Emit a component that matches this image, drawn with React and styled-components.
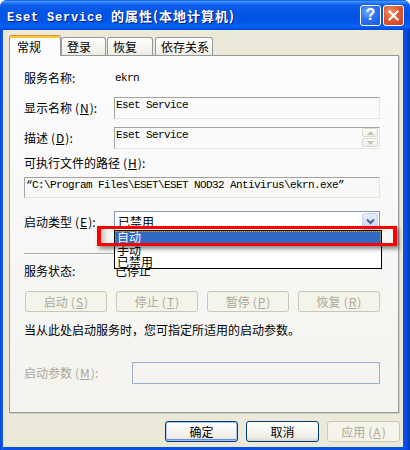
import React from "react";
import styled, { createGlobalStyle } from "styled-components";

const CJK = `"Noto Sans CJK SC", "Noto Sans CJK TC", sans-serif`;
const MONO = `"Liberation Mono", "Noto Sans CJK SC", monospace`;

const GlobalStyle = createGlobalStyle`
  html, body { margin: 0; padding: 0; background: #ffffff; }
  body { width: 410px; height: 450px; overflow: hidden; font-family: ${CJK}; }
`;

const Window = styled.div`
  width: 410px;
  height: 450px;
  display: flex;
  flex-direction: column;
  background: linear-gradient(to right, #0a3fd6 0px, #1060f0 2px, #0a50e6 4px, #0a50e6 calc(100% - 5px), #0838c8 100%);
  border-radius: 7px 7px 0 0;
  overflow: hidden;
`;

const TitleBar = styled.div`
  height: 30px;
  flex: none;
  display: flex;
  align-items: center;
  padding: 0 6px 0 7px;
  background: linear-gradient(
    to bottom,
    #0a5ae0 0%,
    #3f92ff 5%,
    #2777f8 10%,
    #0a5ced 18%,
    #0054e3 45%,
    #0056e8 75%,
    #0062f6 88%,
    #0058ec 94%,
    #0040d0 100%
  );
`;

const Title = styled.div`
  flex: 1;
  color: #ffffff;
  font-weight: bold;
  text-shadow: 1px 1px 0 #0a1a8a;
  white-space: pre;
  display: flex;
  align-items: baseline;
  margin-top: 1px;
`;

const TitleLatin = styled.span`
  font-family: ${MONO};
  font-size: 12px;
  letter-spacing: 0.8px;
`;

const TitleCJK = styled.span`
  font-family: ${CJK};
  font-size: 13px;
  letter-spacing: 1px;
`;

const CaptionButtons = styled.div`
  display: flex;
  gap: 2px;
`;

const CaptionButton = styled.div`
  width: 21px;
  height: 21px;
  box-sizing: border-box;
  border: 1px solid #ffffff;
  border-radius: 3px;
  display: flex;
  align-items: center;
  justify-content: center;
  background: ${(p) =>
    p.$close
      ? "radial-gradient(circle at 35% 30%, #f0906e 0%, #e2582f 45%, #c8401c 100%)"
      : "radial-gradient(circle at 35% 30%, #6fa8ff 0%, #2f72f0 45%, #1a55dc 100%)"};
  color: #ffffff;
  font-family: "Liberation Sans", sans-serif;
  font-weight: bold;
  font-size: 16px;
  line-height: 1;
`;

const Client = styled.div`
  flex: 1;
  margin: 0 7px 3px 3px;
  background: #ece9d8;
  padding: 5px 0 0 6px;
  display: flex;
  flex-direction: column;
`;

const TabStrip = styled.div`
  height: 20px;
  display: flex;
  align-items: flex-end;
  position: relative;
  z-index: 1;
`;

const Tab = styled.div`
  box-sizing: border-box;
  width: ${(p) => p.$w}px;
  height: ${(p) => (p.$active ? 21 : 18)}px;
  margin-bottom: ${(p) => (p.$active ? -1 : 0)}px;
  margin-right: ${(p) => p.$mr || 0}px;
  border: 1px solid #919b9c;
  border-bottom: none;
  border-top-color: ${(p) => (p.$active ? "#e68b2c" : "#919b9c")};
  border-radius: 3px 3px 0 0;
  box-shadow: ${(p) => (p.$active ? "inset 0 2px 0 #ffc83c" : "none")};
  background: ${(p) => (p.$active ? "#fcfcfe" : "linear-gradient(#ffffff, #f3f2ec 70%, #ecebe4)")};
  padding: ${(p) => (p.$active ? "2px 0 0 7px" : "0 0 0 5px")};
  font-family: ${CJK};
  font-size: 12px;
  line-height: 14px;
  color: #000;
  display: flex;
  align-items: center;
`;

const Panel = styled.div`
  box-sizing: border-box;
  height: 358px;
  margin-right: 4px;
  border: 1px solid #919b9c;
  box-shadow: 1px 1px 0 #d4d0c0;
  background: linear-gradient(#fcfcfe, #f4f3ee);
  padding: 0 18px 0 14px;
  display: flex;
  flex-direction: column;
`;

const Row = styled.div`
  display: flex;
  align-items: center;
  height: ${(p) => p.$h}px;
  margin-top: ${(p) => p.$mt}px;
  position: relative;
  flex: none;
`;

const Label = styled.div`
  width: ${(p) => (p.$w ? `${p.$w}px` : "auto")};
  flex: none;
  font-family: ${CJK};
  font-size: 12px;
  line-height: 14px;
  color: ${(p) => (p.$disabled ? "#aca899" : "#000000")};
  white-space: nowrap;
`;

const KeyWrap = styled.span`
  margin-left: 3px;
`;

const Mn = styled.span`
  text-decoration: underline;
  text-underline-offset: 1px;
  margin: 0 1px;
`;

const Key = ({ k }) => (
  <KeyWrap>
    (<Mn>{k}</Mn>)
  </KeyWrap>
);

const MonoValue = styled.div`
  font-family: ${MONO};
  font-size: 11px;
  letter-spacing: -0.6px;
  color: #000;
  padding-left: 1px;
`;

const CJKValue = styled.div`
  font-family: ${CJK};
  font-size: 12px;
  line-height: 14px;
  color: #000;
  padding-left: 1px;
`;

const ReadBox = styled.div`
  flex: 1;
  align-self: stretch;
  box-sizing: border-box;
  border: 1px solid;
  border-color: #a5a49c #e6e5de #e6e5de #a5a49c;
  display: flex;
`;

const BoxText = styled.div`
  flex: 1;
  font-family: ${MONO};
  font-size: 11px;
  letter-spacing: -0.6px;
  line-height: 13px;
  padding: 1px 0 0 1px;
  color: #000;
  white-space: pre;
`;

const ScrollCol = styled.div`
  width: 16px;
  display: flex;
  flex-direction: column;
  gap: 1px;
  padding: 0 1px 1px 0;
`;

const ScrollBtn = styled.div`
  flex: 1;
  box-sizing: border-box;
  border: 1px solid #dcdad0;
  border-radius: 2px;
  background: linear-gradient(#fefefd, #efeee8);
  display: flex;
  align-items: center;
  justify-content: center;
`;

const Combo = styled.div`
  flex: 1;
  align-self: stretch;
  box-sizing: border-box;
  border: 1px solid #7f9db9;
  background: #ffffff;
  display: flex;
  align-items: center;
`;

const ComboText = styled.div`
  flex: 1;
  padding-left: 3px;
  font-family: ${CJK};
  font-size: 12px;
  line-height: 14px;
  color: #000;
`;

const ComboArrow = styled.div`
  width: 16px;
  height: 17px;
  box-sizing: border-box;
  margin-right: 1px;
  border: 1px solid #c3d3fd;
  border-radius: 2px;
  background: linear-gradient(#e6eefc, #d3def8 60%, #c6d5f6);
  display: flex;
  align-items: center;
  justify-content: center;
`;

const DropList = styled.div`
  position: absolute;
  left: 90px;
  top: 19px;
  width: 268px;
  height: 39px;
  box-sizing: border-box;
  border: 1px solid #000000;
  background: #ffffff;
  z-index: 2;
  display: flex;
  flex-direction: column;
`;

const DropItem = styled.div`
  height: ${(p) => (p.$selected ? 13 : 12)}px;
  box-sizing: border-box;
  padding-left: 2px;
  font-family: ${CJK};
  font-size: 12px;
  line-height: 12px;
  color: ${(p) => (p.$selected ? "#ffffff" : "#000000")};
  background: ${(p) => (p.$selected ? "#316ac5" : "transparent")};
  outline: ${(p) => (p.$selected ? "1px dotted #d9a24a" : "none")};
  outline-offset: -1px;
`;

const Highlight = styled.div`
  position: absolute;
  left: 73px;
  top: 15px;
  width: 300px;
  height: 20px;
  box-sizing: border-box;
  border: solid #ff0000;
  border-width: 3px 4px;
  z-index: 3;
  box-shadow: 2px 3px 4px rgba(0, 0, 0, 0.45), inset 7px 0 6px -4px rgba(0, 0, 0, 0.25);
`;

const Separator = styled.div`
  margin-top: 21px;
  height: 0;
  border-top: 1px solid #aca899;
  border-bottom: 1px solid #ffffff;
  flex: none;
`;

const ButtonRow = styled.div`
  display: flex;
  justify-content: space-between;
  height: 21px;
  margin-top: 11px;
  padding-left: 1px;
  flex: none;
`;

const ActionButton = styled.button`
  width: 82px;
  height: 21px;
  padding: 0;
  box-sizing: border-box;
  border: 1px solid #c9c7ba;
  border-radius: 3px;
  background: #f5f4ea;
  color: #aca899;
  font-family: ${CJK};
  font-size: 12px;
  line-height: 14px;
`;

const Note = styled.div`
  margin-top: 11px;
  height: 14px;
  font-family: ${CJK};
  font-size: 12px;
  line-height: 14px;
  color: #000;
  flex: none;
`;

const ParamBox = styled.div`
  flex: 1;
  align-self: stretch;
  box-sizing: border-box;
  border: 1px solid #9cb0cc;
`;

const Footer = styled.div`
  margin-top: 8px;
  height: 21px;
  display: flex;
  justify-content: flex-end;
  gap: 8px;
  padding-right: 3px;
  flex: none;
`;

const DlgButton = styled.button`
  width: 73px;
  height: 21px;
  padding: 0;
  box-sizing: border-box;
  border-radius: 3px;
  font-family: ${CJK};
  font-size: 12px;
  line-height: 14px;
  border: 1px solid ${(p) => (p.disabled ? "#c9c7ba" : "#003c74")};
  color: ${(p) => (p.disabled ? "#aca899" : "#000000")};
  background: ${(p) =>
    p.disabled ? "#f5f4ea" : "linear-gradient(#ffffff, #f4f3ee 60%, #ecebe4 85%, #d8d2c6)"};
  box-shadow: ${(p) =>
    p.$default ? "inset 0 0 0 1px #a9c3f5, inset 0 -1px 0 1px #6b8fe6" : "none"};
`;

const Chevron = () => (
  <svg width="9" height="7" viewBox="0 0 9 7">
    <polyline points="1,1.5 4.5,5 8,1.5" fill="none" stroke="#4d6185" strokeWidth="2" />
  </svg>
);

const Tri = ({ up }) => (
  <svg width="7" height="4" viewBox="0 0 7 4">
    <polygon points={up ? "0,4 7,4 3.5,0" : "0,0 7,0 3.5,4"} fill="#c2c0b4" />
  </svg>
);

const CloseX = () => (
  <svg width="11" height="11" viewBox="0 0 11 11">
    <path d="M1.5 1.5 L9.5 9.5 M9.5 1.5 L1.5 9.5" stroke="#ffffff" strokeWidth="2.2" strokeLinecap="square" />
  </svg>
);

export default function App() {
  return (
    <>
      <GlobalStyle />
      <Window>
        <TitleBar>
          <Title>
            <TitleLatin>{"Eset Service "}</TitleLatin>
            <TitleCJK>的属性(本地计算机)</TitleCJK>
          </Title>
          <CaptionButtons>
            <CaptionButton>?</CaptionButton>
            <CaptionButton $close>
              <CloseX />
            </CaptionButton>
          </CaptionButtons>
        </TitleBar>
        <Client>
          <TabStrip>
            <Tab $active $w={52}>常规</Tab>
            <Tab $w={45} $mr={1}>登录</Tab>
            <Tab $w={46} $mr={2}>恢复</Tab>
            <Tab $w={58}>依存关系</Tab>
          </TabStrip>
          <Panel>
            <Row $mt={11} $h={22}>
              <Label $w={90}>服务名称:</Label>
              <MonoValue>ekrn</MonoValue>
            </Row>
            <Row $mt={8} $h={22}>
              <Label $w={90}>
                显示名称<Key k="N" />:
              </Label>
              <ReadBox>
                <BoxText>Eset Service</BoxText>
              </ReadBox>
            </Row>
            <Row $mt={8} $h={22}>
              <Label $w={90}>
                描述<Key k="D" />:
              </Label>
              <ReadBox>
                <BoxText>Eset Service</BoxText>
                <ScrollCol>
                  <ScrollBtn>
                    <Tri up />
                  </ScrollBtn>
                  <ScrollBtn>
                    <Tri />
                  </ScrollBtn>
                </ScrollCol>
              </ReadBox>
            </Row>
            <Row $mt={7} $h={14}>
              <Label>
                可执行文件的路径<Key k="H" />:
              </Label>
            </Row>
            <Row $mt={7} $h={21}>
              <ReadBox>
                <BoxText>{"\u201CC:\\Program Files\\ESET\\ESET NOD32 Antivirus\\ekrn.exe\u201D"}</BoxText>
              </ReadBox>
            </Row>
            <Row $mt={13} $h={21}>
              <Label $w={90}>
                启动类型<Key k="E" />:
              </Label>
              <Combo>
                <ComboText>已禁用</ComboText>
                <ComboArrow>
                  <Chevron />
                </ComboArrow>
              </Combo>
              <DropList>
                <DropItem $selected>自动</DropItem>
                <DropItem>手动</DropItem>
                <DropItem>已禁用</DropItem>
              </DropList>
              <Highlight />
            </Row>
            <Separator />
            <Row $mt={7} $h={18}>
              <Label $w={90}>服务状态:</Label>
              <CJKValue>已停止</CJKValue>
            </Row>
            <ButtonRow>
              <ActionButton disabled>
                启动<Key k="S" />
              </ActionButton>
              <ActionButton disabled>
                停止<Key k="T" />
              </ActionButton>
              <ActionButton disabled>
                暂停<Key k="P" />
              </ActionButton>
              <ActionButton disabled>
                恢复<Key k="R" />
              </ActionButton>
            </ButtonRow>
            <Note>当从此处启动服务时，您可指定所适用的启动参数。</Note>
            <Row $mt={25} $h={22}>
              <Label $w={108} $disabled>
                启动参数<Key k="M" />:
              </Label>
              <ParamBox />
            </Row>
          </Panel>
          <Footer>
            <DlgButton $default>确定</DlgButton>
            <DlgButton>取消</DlgButton>
            <DlgButton disabled>
              应用<Key k="A" />
            </DlgButton>
          </Footer>
        </Client>
      </Window>
    </>
  );
}
